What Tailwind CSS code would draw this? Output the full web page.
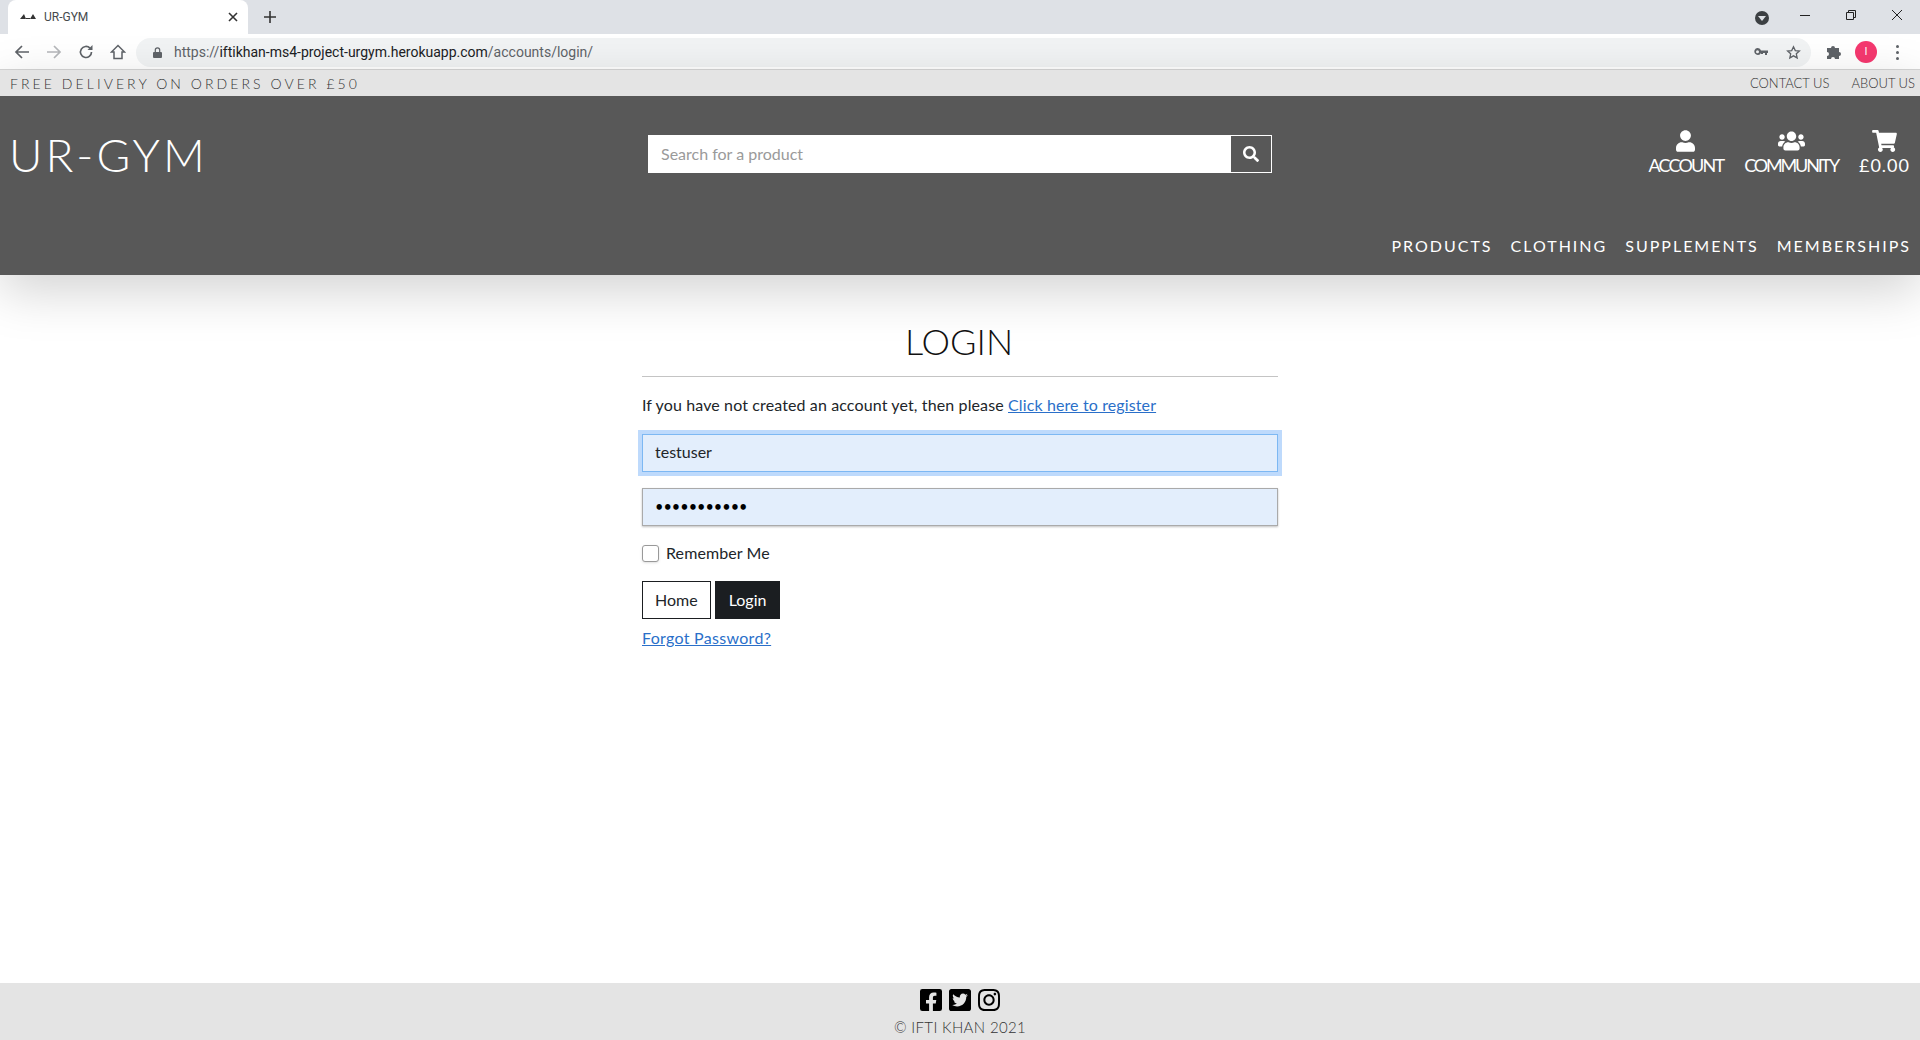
<!DOCTYPE html>
<html lang="en">
<head>
  <meta charset="UTF-8">
  <title>UR-GYM</title>
  <script src="https://cdn.jsdelivr.net/npm/@tailwindcss/browser@4"></script>
</head>
<body class="flex flex-col h-[1040px] overflow-hidden bg-white font-['Lato',sans-serif] text-[#212529]">
  <!-- browser tab strip -->
  <div class="flex items-end h-[34px] bg-[#dee1e6] pl-2 shrink-0">
    <div class="flex items-center w-[240px] h-[34px] bg-white rounded-t-lg pl-[12px] pr-[10px] font-['Roboto',sans-serif] text-[12px] text-[#45494d]">
      <svg class="w-[16px] h-[8px] mr-[8px]" viewBox="0 0 16 8"><path fill="#333" d="M0 6 4 1l2 5zM10 6l3-5 3 5zM6 5h4v1H6z"/></svg>
      <span>UR-GYM</span>
      <svg class="w-[10px] h-[10px] ml-auto" viewBox="0 0 10 10"><path stroke="#333" stroke-width="1.6" d="M1 1l8 8M9 1 1 9"/></svg>
    </div>
    <svg class="w-[12px] h-[12px] ml-[16px] mb-[11px]" viewBox="0 0 12 12"><path stroke="#333" stroke-width="1.6" d="M6 0v12M0 6h12"/></svg>
    <div class="flex items-center ml-auto h-[34px] pb-[4px]">
      <div class="flex items-center justify-center w-[14px] h-[14px] mt-[6px] rounded-full bg-[#3c4043] mr-[13px]">
        <div class="w-0 h-0 border-x-[4px] border-x-transparent border-t-[5px] border-t-[#dee1e6]"></div>
      </div>
      <svg class="w-[46px] h-[12px]" viewBox="0 0 46 12"><path stroke="#222" d="M18 6.5h10"/></svg>
      <svg class="w-[46px] h-[12px]" viewBox="0 0 46 12"><path fill="none" stroke="#222" d="M18.5 3.5h7v7h-7zM20.500 3.500v-2h7v7h-2"/></svg>
      <svg class="w-[46px] h-[12px]" viewBox="0 0 46 12"><path stroke="#222" d="M18 1l10 10M28 1 18 11"/></svg>
    </div>
  </div>
  <!-- browser toolbar -->
  <div class="flex items-center h-[36px] pt-[1px] bg-white border-b border-[#d5d5d5] shrink-0">
    <svg class="w-[16px] h-[16px] ml-[14px]" viewBox="0 0 16 16"><path fill="none" stroke="#5f6368" stroke-width="1.7" d="M15 8H2M8 2 2 8l6 6"/></svg>
    <svg class="w-[16px] h-[16px] ml-[16px]" viewBox="0 0 16 16"><path fill="none" stroke="#b5b7ba" stroke-width="1.7" d="M1 8h13M8 2l6 6-6 6"/></svg>
    <svg class="w-[16px] h-[16px] ml-[16px]" viewBox="0 0 16 16"><path fill="none" stroke="#5f6368" stroke-width="1.7" d="M13.5 8A5.5 5.5 0 1 1 12 4.2"/><path fill="#5f6368" d="M14.5 1v5h-5z"/></svg>
    <svg class="w-[16px] h-[16px] ml-[16px]" viewBox="0 0 16 16"><path fill="none" stroke="#5f6368" stroke-width="1.5" d="M8 1.500 1.500 8H4v6.500h8V8h2.500z"/></svg>
    <div class="flex items-center flex-1 h-[29px] ml-[10px] bg-[#f1f3f4] rounded-full pl-[17px] font-['Roboto',sans-serif] text-[14px]">
      <svg class="w-[9px] h-[11px] mr-[12px]" viewBox="0 0 9 11"><path fill="#5f6368" d="M1 5h7a1 1 0 0 1 1 1v4a1 1 0 0 1-1 1H1a1 1 0 0 1-1-1V6a1 1 0 0 1 1-1z"/><path fill="none" stroke="#5f6368" stroke-width="1.2" d="M2.300 5V3a2.200 2.200 0 0 1 4.400 0v2"/></svg>
      <span class="text-[#5f6368]">https://</span><span class="text-[#202124]">iftikhan-ms4-project-urgym.herokuapp.com</span><span class="text-[#5f6368]">/accounts/login/</span>
      <svg class="w-[14px] h-[8px] ml-auto" viewBox="0 0 14 8"><path fill="#5f6368" fill-rule="evenodd" d="M3.500 0A3.500 3.500 0 0 1 7 2.600h7V5h-1v2h-2V5H9v1H7V5a3.500 3.500 0 1 1-3.500-5zm0 2.200a1.500 1.500 0 1 0 0 3 1.500 1.500 0 0 0 0-3z"/></svg>
      <svg class="w-[15px] h-[15px] ml-[18px] mr-[10px]" viewBox="0 0 16 16"><path fill="none" stroke="#5f6368" stroke-width="1.4" d="M8 1.800l1.900 4.100 4.400.5-3.300 3 .9 4.400L8 11.600l-3.900 2.200.9-4.400-3.300-3 4.400-.5z"/></svg>
    </div>
    <svg class="w-[14px] h-[14px] ml-[16px]" viewBox="0 0 14 14"><path fill="#5f6368" d="M0 3h4a2 2 0 1 1 4 0h4v4a2 2 0 1 1 0 4v3H8a2 2 0 1 0-4 0H0v-3a2 2 0 1 0 0-4z"/></svg>
    <div class="flex items-center justify-center w-[22px] h-[22px] ml-[14px] rounded-full bg-[#f5386f] text-white text-[11px] font-['Roboto',sans-serif]">I</div>
    <div class="flex flex-col gap-[3px] ml-[19px] mr-[21px]">
      <div class="w-[3px] h-[3px] rounded-full bg-[#5f6368]"></div>
      <div class="w-[3px] h-[3px] rounded-full bg-[#5f6368]"></div>
      <div class="w-[3px] h-[3px] rounded-full bg-[#5f6368]"></div>
    </div>
  </div>
  <!-- site header -->
  <header class="shrink-0 relative z-10 shadow-[0_16px_48px_rgba(0,0,0,0.175)]">
    <div class="flex items-center justify-between h-[26px] bg-[#e4e4e4] pl-[10px] pr-[5px] pt-[1px] text-[#333]">
      <p class="text-[14px] font-light tracking-[0.22em]">FREE DELIVERY ON ORDERS OVER £50</p>
      <div class="flex gap-[22px] text-[13px] font-light">
        <a>CONTACT US</a>
        <a>ABOUT US</a>
      </div>
    </div>
    <div class="h-[179px] bg-[#585858] text-white">
      <div class="grid grid-cols-3 h-[130px]">
        <div class="pl-[9px] pt-[29px]">
          <a class="text-[46px] leading-[60px] font-light tracking-[3px]">UR-GYM</a>
        </div>
        <div class="px-2 pt-[39px]">
          <div class="flex h-[38px] bg-white">
            <input class="flex-1 min-w-0 px-[13px] pb-[1px] text-[16px] text-[#495057] placeholder:text-[#9a9a9a] outline-none" placeholder="Search for a product">
            <button class="flex items-center justify-center w-[42px] bg-[#585858] border border-white">
              <svg class="w-[16px] h-[16px] fill-white" viewBox="0 0 512 512"><path d="M505 442.700L405.300 343c-4.500-4.500-10.600-7-17-7H372c27.600-35.300 44-79.700 44-128C416 93.100 322.900 0 208 0S0 93.100 0 208s93.100 208 208 208c48.300 0 92.700-16.400 128-44v16.300c0 6.400 2.500 12.500 7 17l99.700 99.700c9.400 9.400 24.600 9.400 33.900 0l28.300-28.300c9.400-9.400 9.400-24.600.1-34zM208 336c-70.700 0-128-57.200-128-128 0-70.700 57.200-128 128-128 70.700 0 128 57.200 128 128 0 70.700-57.200 128-128 128z"/></svg>
            </button>
          </div>
        </div>
        <div class="flex justify-end gap-[21px] pr-[10px] pt-[34px] text-[18px] leading-[26px]">
          <a class="flex flex-col items-center">
            <svg class="h-[22px] w-[19px] fill-white" viewBox="0 0 448 512"><path d="M224 256c70.700 0 128-57.300 128-128S294.700 0 224 0 96 57.300 96 128s57.300 128 128 128zm89.600 32h-16.700c-22.200 10.200-46.900 16-72.900 16s-50.600-5.800-72.900-16h-16.700C60.200 288 0 348.200 0 422.400V464c0 26.500 21.500 48 48 48h352c26.500 0 48-21.500 48-48v-41.600c0-74.200-60.200-134.400-134.400-134.400z"/></svg>
            <span class="tracking-[-1.8px]">ACCOUNT</span>
          </a>
          <a class="flex flex-col items-center">
            <svg class="h-[22px] w-[27px] fill-white" viewBox="0 0 640 512"><path d="M96 224c35.300 0 64-28.700 64-64s-28.700-64-64-64-64 28.700-64 64 28.700 64 64 64zm448 0c35.300 0 64-28.700 64-64s-28.700-64-64-64-64 28.700-64 64 28.700 64 64 64zm32 32h-64c-17.600 0-33.500 7.100-45.100 18.600 40.300 22.100 68.900 62 75.100 109.400h66c17.700 0 32-14.300 32-32v-32c0-35.300-28.700-64-64-64zm-256 0c61.900 0 112-50.100 112-112S381.900 32 320 32 208 82.100 208 144s50.100 112 112 112zm76.800 32h-8.300c-20.800 10-43.900 16-68.500 16s-47.600-6-68.500-16h-8.300C179.600 288 128 339.600 128 403.200V432c0 26.500 21.500 48 48 48h288c26.500 0 48-21.500 48-48v-28.800c0-63.600-51.600-115.200-115.200-115.200zm-223.700-13.400C161.500 263.100 145.600 256 128 256H64c-35.300 0-64 28.700-64 64v32c0 17.700 14.300 32 32 32h65.900c6.300-47.400 34.900-87.300 75.200-109.400z"/></svg>
            <span class="tracking-[-2.2px]">COMMUNITY</span>
          </a>
          <a class="flex flex-col items-center">
            <svg class="h-[22px] w-[25px] fill-white" viewBox="0 0 576 512"><path d="M528.120 301.319l47.273-208C578.806 78.301 567.391 64 551.990 64H159.208l-9.166-44.810C147.758 8.021 137.930 0 126.529 0H24C10.745 0 0 10.745 0 24v16c0 13.255 10.745 24 24 24h69.883l70.248 343.435C147.325 417.100 136 435.222 136 456c0 30.928 25.072 56 56 56s56-25.072 56-56c0-15.674-6.447-29.835-16.824-40h209.647C430.447 426.165 424 440.326 424 456c0 30.928 25.072 56 56 56s56-25.072 56-56c0-22.172-12.888-41.332-31.579-50.405l5.517-24.276c3.413-15.018-8.002-29.319-23.403-29.319H218.117l-6.545-32h293.145c11.206 0 20.920-7.754 23.403-18.681z"/></svg>
            <span class="tracking-[1px]">£0.00</span>
          </a>
        </div>
      </div>
      <nav class="flex justify-end gap-[18px] pr-[9px] pt-[8px] text-[16px] leading-[24px] tracking-[2px]">
        <a>PRODUCTS</a>
        <a>CLOTHING</a>
        <a>SUPPLEMENTS</a>
        <a>MEMBERSHIPS</a>
      </nav>
    </div>
  </header>
  <!-- login form -->
  <main class="flex-1 w-[636px] mx-auto pt-[39px] text-[16px]">
    <h1 class="text-center text-[36px] leading-[54px] font-light text-[#111] mr-[2px]">LOGIN</h1>
    <hr class="mt-[8px] border-[#c4c4c4]">
    <p class="mt-[16px] leading-[24px] tracking-[0.12px]">If you have not created an account yet, then please <a class="text-[#2a6fc9] underline">Click here to register</a></p>
    <form class="mt-[17px]">
      <input class="block w-full h-[38px] px-[12px] pb-[3px] bg-[#e3eefc] border border-[#7db8f3] shadow-[0_0_0_4px_#bedafc] outline-none text-[#212529]" value="testuser">
      <input type="password" class="block w-full h-[38px] mt-[16px] px-[12px] pb-[1px] bg-[#e3eefc] border border-[#aaa] shadow-[0_1px_2px_rgba(0,0,0,0.25)] outline-none text-black text-[14.5px]" value="testpass123">
      <label class="flex items-center mt-[15px] h-[24px] tracking-[0.1px]">
        <input type="checkbox" class="w-[17px] h-[17px] mr-[7px] appearance-none bg-white border border-[#999] rounded-[3px] shadow-sm">
        Remember Me
      </label>
      <div class="flex gap-[4px] mt-[16px]">
        <a class="flex items-center h-[38px] px-[12px] pb-[1px] border border-[#1b1e21] bg-white">Home</a>
        <button type="button" class="h-[38px] px-[14px] pb-[1px] bg-[#1b1e21] text-white">Login</button>
      </div>
      <a class="block mt-[7px] leading-[24px] tracking-[0.3px] text-[#2a6fc9] underline">Forgot Password?</a>
    </form>
  </main>
  <!-- footer -->
  <footer class="flex flex-col items-center h-[57px] bg-[#e4e4e4] shrink-0">
    <div class="flex gap-[7px] mt-[4px]">
      <svg class="w-[22px] h-[26px]" viewBox="0 0 448 512"><path d="M400 32H48A48 48 0 0 0 0 80v352a48 48 0 0 0 48 48h137.250V327.690h-63V256h63v-54.640c0-62.150 37-96.480 93.670-96.480 27.140 0 55.520 4.840 55.520 4.840v61h-31.270c-30.810 0-40.420 19.120-40.420 38.730V256h68.780l-11 71.690h-57.780V480H400a48 48 0 0 0 48-48V80a48 48 0 0 0-48-48z"/></svg>
      <svg class="w-[22px] h-[26px]" viewBox="0 0 448 512"><path d="M400 32H48C21.500 32 0 53.500 0 80v352c0 26.500 21.500 48 48 48h352c26.500 0 48-21.500 48-48V80c0-26.500-21.500-48-48-48zm-48.900 158.800c.2 2.800.2 5.700.2 8.500 0 86.700-66 186.600-186.600 186.600-37.200 0-71.700-10.800-100.700-29.400 5.300.6 10.400.8 15.800.8 30.700 0 58.900-10.400 81.400-28-28.800-.6-53-19.500-61.300-45.500 10.100 1.500 19.200 1.500 29.600-1.200-30-6.100-52.500-32.500-52.500-64.400v-.8c8.700 4.900 18.900 7.900 29.600 8.300a65.447 65.447 0 0 1-29.200-54.600c0-12.200 3.200-23.400 8.900-33.100 32.300 39.800 80.800 65.800 135.200 68.600-9.300-44.500 24-80.600 64-80.600 18.900 0 35.900 7.900 47.900 20.700 14.800-2.800 29-8.300 41.600-15.800-4.900 15.200-15.200 28-28.800 36.100 13.200-1.400 26-5.100 37.800-10.200-8.900 13.100-20.100 24.700-32.900 34z"/></svg>
      <svg class="w-[22px] h-[26px]" viewBox="0 0 448 512"><path d="M224.100 141c-63.600 0-114.900 51.300-114.900 114.900s51.300 114.900 114.900 114.900S339 319.500 339 255.900 287.700 141 224.100 141zm0 189.600c-41.100 0-74.700-33.500-74.700-74.700s33.500-74.700 74.700-74.700 74.700 33.500 74.700 74.700-33.600 74.700-74.700 74.700zm146.400-194.300c0 14.900-12 26.800-26.800 26.800-14.900 0-26.800-12-26.800-26.800s12-26.800 26.800-26.800 26.800 12 26.800 26.800zm76.100 27.200c-1.700-35.900-9.900-67.700-36.200-93.900-26.200-26.200-58-34.400-93.900-36.200-37-2.100-147.900-2.100-184.900 0-35.800 1.700-67.600 9.900-93.900 36.100s-34.400 58-36.200 93.900c-2.100 37-2.100 147.900 0 184.900 1.700 35.900 9.900 67.700 36.200 93.900s58 34.400 93.900 36.200c37 2.100 147.900 2.100 184.900 0 35.900-1.700 67.700-9.900 93.900-36.200 26.200-26.200 34.400-58 36.200-93.900 2.100-37 2.100-147.800 0-184.800zM398.800 388c-7.800 19.600-22.900 34.700-42.600 42.600-29.500 11.700-99.500 9-132.100 9s-102.700 2.600-132.100-9c-19.600-7.800-34.700-22.900-42.600-42.600-11.700-29.500-9-99.500-9-132.100s-2.600-102.700 9-132.100c7.800-19.600 22.900-34.700 42.600-42.600 29.500-11.700 99.500-9 132.100-9s102.700-2.600 132.100 9c19.600 7.800 34.700 22.900 42.600 42.600 11.700 29.500 9 99.500 9 132.100s2.700 102.700-9 132.100z"/></svg>
    </div>
    <p class="mt-[4px] text-[15px] leading-[20px] font-light tracking-[0.35px] text-[#333]">© IFTI KHAN 2021</p>
  </footer>
</body>
</html>
